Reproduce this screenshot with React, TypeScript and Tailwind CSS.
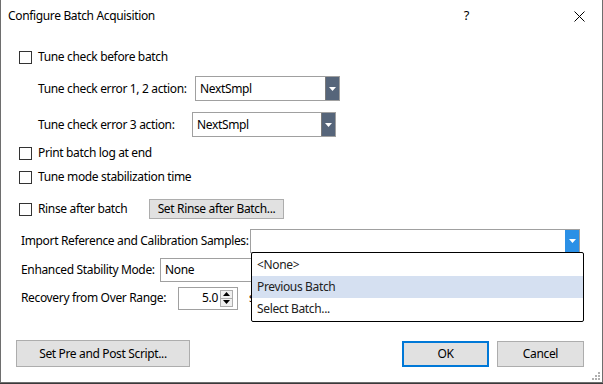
import React from 'react';

const font = { fontFamily: '"Segoe UI", "Noto Sans", sans-serif' };

const Check: React.FC<{ label: string }> = ({ label }) => (
    <div className="flex items-center h-[20px]">
        <div className="w-[13px] h-[13px] border border-[#333] bg-white shrink-0" />
        <span className="ml-[6px] whitespace-nowrap">{label}</span>
    </div>
);

const Arrow: React.FC<{ color?: string }> = ({ color = 'white' }) => (
    <svg width="7" height="4" viewBox="0 0 7 4">
        <path d="M0 0 H7 L3.5 4 Z" fill={color} />
    </svg>
);

const Combo: React.FC<{ value: string; className: string; blue?: boolean }> = ({ value, className, blue }) => (
    <div className={`flex items-stretch border border-[#a0a0a0] bg-white shrink-0 ${className}`}>
        <div className="flex-1 flex items-center pl-[4px] text-black whitespace-nowrap">{value}</div>
        <div className={`w-[14px] flex items-center justify-center ${blue ? 'bg-[#2b90e6]' : 'bg-[#56657a] border-l border-[#7a7a7a]'}`}>
            <Arrow />
        </div>
    </div>
);

const Btn: React.FC<{ label: string; className: string; primary?: boolean }> = ({ label, className, primary }) => (
    <div
        className={`flex items-center justify-center bg-[#e1e1e1] whitespace-nowrap shrink-0 ${primary ? 'border-2 border-[#0078d7]' : 'border border-[#adadad]'} ${className}`}
    >
        {label}
    </div>
);

const App: React.FC = () => {
    return (
        <div className="w-[603px] h-[384px] bg-[#3a3a3a] overflow-hidden" style={font}>
            <div className="relative w-[603px] h-[383px] bg-white border-x border-b border-[#6e6e6e] text-[12px] tracking-[-0.35px] text-black">
                {/* title bar */}
                <div className="h-[32px] flex items-center pl-[7px]">
                    <span className="whitespace-nowrap">Configure Batch Acquisition</span>
                    <span className="ml-auto mr-[133px] text-[13px]">?</span>
                </div>
                <svg className="absolute left-[573px] top-[11px]" width="11" height="11" viewBox="0 0 11 11">
                    <path d="M0.5 0.5 L10.5 10.5 M10.5 0.5 L0.5 10.5" stroke="black" strokeWidth="1" />
                </svg>

                <div className="flex flex-col">
                    <div className="mt-[15px] pl-[18px]">
                        <Check label="Tune check before batch" />
                    </div>
                    <div className="mt-[9px] flex items-center h-[25px] pl-[37px]">
                        <span className="w-[157px] shrink-0 whitespace-nowrap">Tune check error 1, 2 action:</span>
                        <Combo value="NextSmpl" className="w-[145px] h-[25px]" />
                    </div>
                    <div className="mt-[11px] flex items-center h-[25px] pl-[37px]">
                        <span className="w-[154px] shrink-0 whitespace-nowrap">Tune check error 3 action:</span>
                        <Combo value="NextSmpl" className="w-[144px] h-[25px]" />
                    </div>
                    <div className="mt-[6px] pl-[18px]">
                        <Check label="Print batch log at end" />
                    </div>
                    <div className="mt-[4px] pl-[18px]">
                        <Check label="Tune mode stabilization time" />
                    </div>
                    <div className="mt-[12px] pl-[18px] flex items-center h-[20px]">
                        <div className="w-[130px] shrink-0">
                            <Check label="Rinse after batch" />
                        </div>
                        <Btn label="Set Rinse after Batch..." className="w-[135px] h-[20px]" />
                    </div>
                    <div className="mt-[10px] pl-[20px] flex items-center h-[23px]">
                        <span className="w-[229px] shrink-0 whitespace-nowrap">Import Reference and Calibration Samples:</span>
                        <Combo value="" className="w-[330px] h-[24px]" blue />
                    </div>
                    <div className="mt-[6px] pl-[20px] flex items-center h-[23px]">
                        <span className="w-[139px] shrink-0 whitespace-nowrap">Enhanced Stability Mode:</span>
                        <Combo value="None" className="w-[180px] h-[24px]" />
                    </div>
                    <div className="mt-[6px] pl-[20px] flex items-center h-[22px]">
                        <span className="w-[157px] shrink-0 whitespace-nowrap">Recovery from Over Range:</span>
                        <div className="w-[60px] h-[23px] border border-[#a0a0a0] flex items-stretch shrink-0">
                            <div className="flex-1 flex items-center justify-end pr-[2px]">5.0</div>
                            <div className="w-[13px] my-[2px] mr-[4px] flex flex-col border border-[#adadad]">
                                <div className="flex-1 flex items-center justify-center bg-[#f0f0f0] border-b border-[#adadad]">
                                    <svg width="7" height="4" viewBox="0 0 7 4">
                                        <path d="M0 4 H7 L3.5 0 Z" fill="black" />
                                    </svg>
                                </div>
                                <div className="flex-1 flex items-center justify-center bg-[#f0f0f0]">
                                    <Arrow color="black" />
                                </div>
                            </div>
                        </div>
                        <span className="ml-[11px]">sec</span>
                    </div>
                    <div className="mt-[31px] pl-[15px] pr-[18px] flex items-center">
                        <Btn label="Set Pre and Post Script..." className="w-[174px] h-[27px]" />
                        <Btn label="OK" className="ml-auto w-[87px] h-[26px]" primary />
                        <Btn label="Cancel" className="ml-[8px] w-[87px] h-[26px]" />
                    </div>
                </div>

                {/* open dropdown list */}
                <div className="absolute left-[250px] top-[252px] w-[333px] h-[70px] bg-white border border-black rounded-[2px] text-[#222] py-px">
                    <div className="h-[22px] flex items-center pl-[5px]">&lt;None&gt;</div>
                    <div className="h-[22px] flex items-center pl-[5px] bg-[#d5e0f1]">Previous Batch</div>
                    <div className="h-[22px] flex items-center pl-[5px]">Select Batch...</div>
                </div>

                {/* size grip */}
                <div className="absolute right-[1px] bottom-[1px] w-[9px] h-[9px]">
                    <div className="absolute left-[6px] top-0 w-[2px] h-[2px] bg-[#b0b0b0]" />
                    <div className="absolute left-[3px] top-[3px] w-[2px] h-[2px] bg-[#b0b0b0]" />
                    <div className="absolute left-[6px] top-[3px] w-[2px] h-[2px] bg-[#b0b0b0]" />
                    <div className="absolute left-0 top-[6px] w-[2px] h-[2px] bg-[#b0b0b0]" />
                    <div className="absolute left-[3px] top-[6px] w-[2px] h-[2px] bg-[#b0b0b0]" />
                    <div className="absolute left-[6px] top-[6px] w-[2px] h-[2px] bg-[#b0b0b0]" />
                </div>
            </div>
        </div>
    );
};

export default App;
